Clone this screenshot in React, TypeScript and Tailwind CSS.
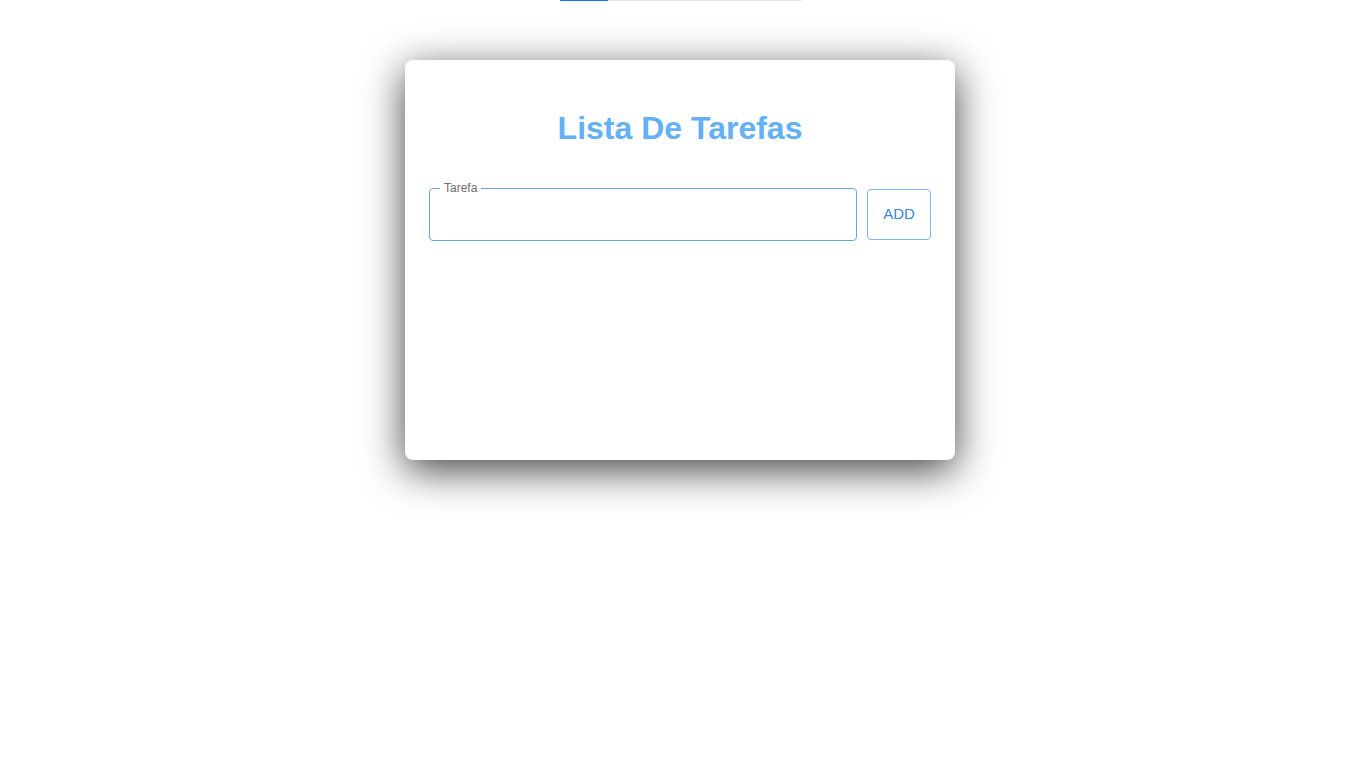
import React from "react";

export default function App() {
  return (
    <div className="min-h-screen w-full bg-white flex flex-col items-center" style={{ fontFamily: "'Liberation Sans', Arial, sans-serif" }}>
      <div className="flex h-px w-[241px]">
        <div className="w-[48px] h-px bg-[#0a7ad6]" />
        <div className="flex-1 h-px bg-[#e2e2e2]" />
      </div>
      <div className="mt-[59px] w-[550px] h-[400px] bg-white rounded-lg shadow-[0_10px_40px_rgba(0,0,0,0.75)] px-6 pt-[50px] flex flex-col">
        <h1 className="text-center text-[32px] leading-[37px] font-bold text-[#64b0f4]">
          Lista De Tarefas
        </h1>
        <div className="mt-[41px] flex items-center gap-[10px]">
          <div className="relative flex-1 h-[53px] border border-[#64a6e8] rounded-[4px]">
            <span className="absolute left-[10px] -top-[8px] bg-white px-[4px] text-[12px] leading-[14px] text-[#6e6e6e]">
              Tarefa
            </span>
          </div>
          <button className="h-[51px] w-[64px] border border-[#7db6ee] rounded-[4px] text-[15px] text-[#3a86d8] bg-white">
            ADD
          </button>
        </div>
      </div>
    </div>
  );
}
